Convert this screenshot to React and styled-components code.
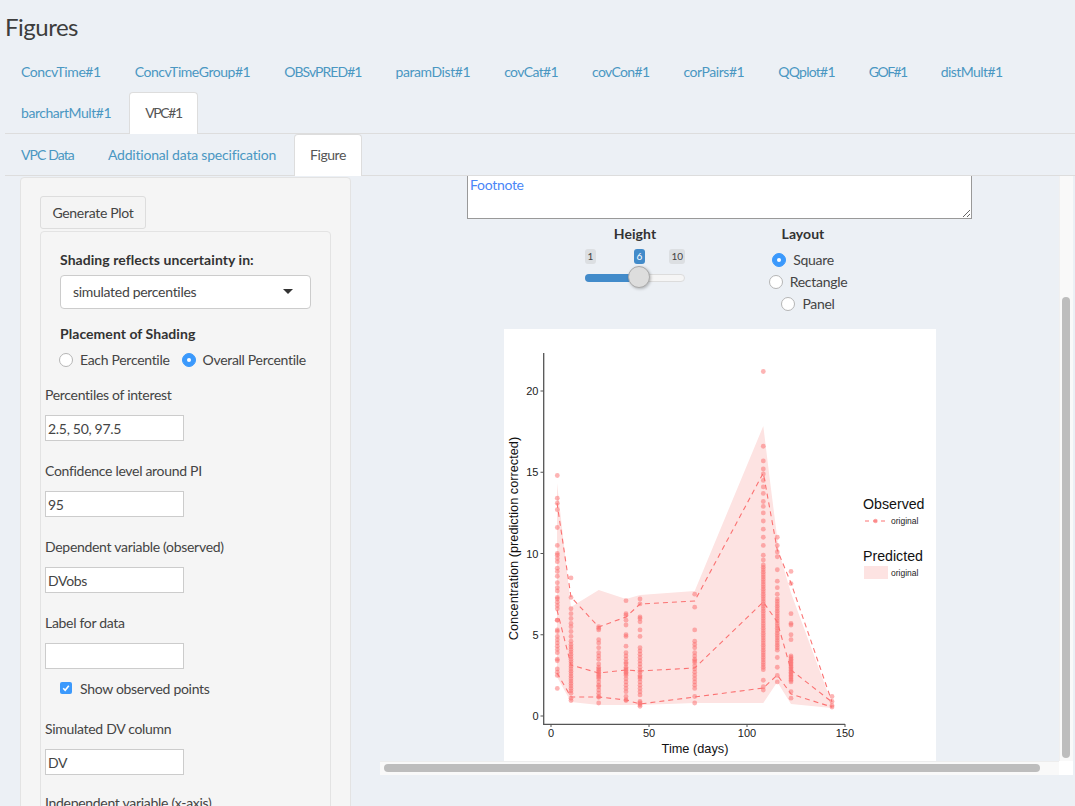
import styled, { createGlobalStyle } from "styled-components";

const GlobalStyle = createGlobalStyle`
  html, body {
    margin: 0;
    height: 100%;
    overflow: hidden;
    background: #ecf0f5;
    color: #444;
    font-family: Lato, "Noto Sans", sans-serif;
    font-size: 14px;
    letter-spacing: -0.3px;
  }
  * { box-sizing: border-box; }
`;

const Page = styled.div`
  width: 1075px;
  height: 806px;
  overflow: hidden;
`;

const Title = styled.h2`
  margin: 0;
  height: 52px;
  padding: 13px 0 0 5px;
  font-size: 24px;
  line-height: 28px;
  font-weight: 400;
  color: #3d3d3d;
  letter-spacing: -0.5px;
`;

const TabBar = styled.ul`
  list-style: none;
  margin: 0 0 0 5px;
  padding: 0;
  display: flex;
  flex-wrap: wrap;
  column-gap: 2px;
  border-bottom: 1px solid #ddd;
`;

const Tab = styled.li`
  height: ${(p) => p.$h + (p.$active ? 1 : 0)}px;
  padding: 0 15px;
  line-height: ${(p) => p.$lh}px;
  letter-spacing: ${(p) => p.$track}px;
  color: ${(p) => (p.$active ? "#555" : "#4a97c2")};
  background: ${(p) => (p.$active ? "#fff" : "transparent")};
  border: 1px solid ${(p) => (p.$active ? "#ddd" : "transparent")};
  border-bottom: none;
  border-radius: 4px 4px 0 0;
  margin-bottom: ${(p) => (p.$active ? "-1px" : "0")};
`;

const Main = styled.div`
  display: flex;
  height: 630px;
  overflow: hidden;
`;

const Sidebar = styled.div`
  flex: 0 0 380px;
  padding: 1px 29px 0 20px;
  overflow: hidden;
`;

const Well = styled.div`
  background: #f5f5f5;
  border: 1px solid #e3e3e3;
  border-radius: 4px;
  padding: 18px 19px;
`;

const PlotButton = styled.button`
  display: block;
  width: 106px;
  height: 33px;
  padding: 0;
  background: #f4f4f4;
  border: 1px solid #ddd;
  border-radius: 3px;
  color: #444;
  font: inherit;
  letter-spacing: inherit;
  margin-bottom: 2px;
`;

const InnerWell = styled.div`
  background: #f5f5f5;
  border: 1px solid #e3e3e3;
  border-radius: 4px;
  padding: 19px 4px 0;
`;

const ShadingGroup = styled.div`
  padding: 0 15px;
`;

const BoldLabel = styled.div`
  font-weight: 700;
  line-height: 18px;
  color: #333;
  letter-spacing: 0.05px;
  margin-bottom: ${(p) => p.$mb || 0}px;
`;

const SelectBox = styled.div`
  height: 34px;
  width: 251px;
  display: flex;
  align-items: center;
  justify-content: space-between;
  padding: 0 17px 2px 12px;
  background: #fff;
  border: 1px solid #ccc;
  border-radius: 4px;
  margin-bottom: 16px;
`;

const Caret = styled.span`
  width: 0;
  height: 0;
  border-left: 5px solid transparent;
  border-right: 5px solid transparent;
  border-top: 5px solid #333;
`;

const RadioRow = styled.div`
  display: flex;
  gap: 12px;
  margin-top: 7px;
  margin-left: -1px;
  height: 20px;
  margin-bottom: 15px;
`;

const RadioLabel = styled.label`
  display: inline-flex;
  align-items: center;
  gap: 7px;
  line-height: 20px;
  white-space: nowrap;
`;

const RadioDot = styled.span`
  width: 14px;
  height: 14px;
  flex: none;
  border-radius: 50%;
  background: ${(p) => (p.$on ? "#3b99fc" : "#fff")};
  border: 1px solid ${(p) => (p.$on ? "#3b99fc" : "#b5b5b5")};
  display: flex;
  align-items: center;
  justify-content: center;
  &::after {
    content: "";
    width: 4px;
    height: 4px;
    border-radius: 50%;
    background: ${(p) => (p.$on ? "#fff" : "transparent")};
  }
`;

const Field = styled.div`
  height: ${(p) => p.$h || 76}px;
`;

const FieldLabel = styled.div`
  line-height: 20px;
  margin-bottom: 10px;
`;

const TextInput = styled.input`
  display: block;
  width: 139px;
  height: 26px;
  padding: 0 2px;
  background: #fff;
  border: 1px solid #ccc;
  border-radius: 0;
  color: #444;
  font: inherit;
  letter-spacing: inherit;
`;

const CheckRow = styled.div`
  display: flex;
  align-items: center;
  gap: 8px;
  height: 20px;
  margin: -11px 0 21px 15px;
`;

const CheckBox = styled.span`
  width: 12px;
  height: 12px;
  border-radius: 2px;
  background: #3b99fc;
  display: flex;
  align-items: center;
  justify-content: center;
`;

const Pane = styled.div`
  flex: 0 0 693px;
  display: grid;
  grid-template-columns: 679px 14px;
  grid-template-rows: 585px 14px;
`;

const PaneBody = styled.div`
  display: flex;
  flex-direction: column;
  align-items: center;
  overflow: hidden;
`;

const Footnote = styled.textarea`
  flex: none;
  width: 505px;
  height: 43px;
  padding: 0 2px;
  background: #fff;
  border: 1px solid #999;
  border-top: none;
  border-radius: 0;
  color: #4a86f7;
  font: inherit;
  letter-spacing: inherit;
  line-height: 18px;
  outline: none;
  resize: both;
`;

const Controls = styled.div`
  flex: none;
  display: flex;
  gap: 77px;
  height: 110px;
  padding-top: 6px;
`;

const SliderCol = styled.div`
  width: 100px;
`;

const LayoutCol = styled.div`
  width: 92px;
  display: flex;
  flex-direction: column;
  align-items: center;
`;

const CenterLabel = styled.div`
  font-weight: 700;
  font-size: 14px;
  line-height: 18px;
  color: #333;
  letter-spacing: 0.05px;
  text-align: center;
  padding-right: ${(p) => p.$nudge || 0}px;
`;

const SliderLabels = styled.div`
  display: flex;
  margin-top: 6px;
`;

const SliderTag = styled.span`
  height: 15px;
  min-width: 11px;
  margin-left: ${(p) => p.$ml || 0}px;
  padding: 0 2.5px;
  font-size: 10px;
  line-height: 15px;
  text-align: center;
  border-radius: 3px;
  letter-spacing: 0;
  background: ${(p) => (p.$on ? "#428bca" : "#dcdfe2")};
  color: ${(p) => (p.$on ? "#fff" : "#444")};
`;

const SliderTrack = styled.div`
  position: relative;
  height: 8px;
  margin-top: 10px;
  background: #f5f5f5;
  border: 1px solid #dcdcdc;
  border-radius: 4px;
`;

const SliderFill = styled.div`
  height: 8px;
  margin: -1px 0 0 -1px;
  background: #428bca;
  border-radius: 4px 0 0 4px;
`;

const SliderHandle = styled.div`
  position: absolute;
  top: -9px;
  left: 42px;
  width: 22px;
  height: 22px;
  border-radius: 50%;
  background: #ddd;
  border: 1px solid #aaa;
  box-shadow: 1px 1px 3px rgba(0, 0, 0, 0.25);
`;

const LayoutOptions = styled.div`
  margin-top: 6px;
  display: flex;
  flex-direction: column;
  align-items: center;
`;

const LayoutOption = styled(RadioLabel)`
  height: 22px;
  padding-right: ${(p) => p.$nudge || 0}px;
`;

const PlotSvg = styled.svg`
  flex: none;
  display: block;
  width: 432px;
  height: 432px;
  background: #fff;
`;

const VTrack = styled.div`
  background: #f9f9f9;
  border-left: 1px solid #f0f0f0;
  padding: 121px 3px 3px 2px;
`;

const VThumb = styled.div`
  width: 8px;
  height: 100%;
  border-radius: 4px;
  background: #bdbdbd;
`;

const HTrack = styled.div`
  background: #f9f9f9;
  border-top: 1px solid #ededed;
  padding: 2px 19px 2px 4px;
`;

const HThumb = styled.div`
  height: 8px;
  border-radius: 4px;
  background: #bdbdbd;
`;

const Corner = styled.div`
  background: #fff;
`;

const xPx = (t) => 551 + t * 1.96;
const yPx = (v) => 716 - v * 16.25;

const range = (from, to, step) => {
  const out = [];
  for (let v = from; v >= to; v -= step) out.push(v);
  return out;
};

const columns = [
  [557.3, [14.8, 13.4, 13.1, 12.7, 11.6, 10.5, 10, 9.9, 9.7, 9.5, 9.1, 8.9, 8.6, 8.2, 7.9, 7.7, 7.3, 7.2, 7, 6.8, 6.6, 5.9, 5.9, 5.3, 5.2, 4.9, 4.7, 4.5, 4.3, 4.1, 3.9, 3.5, 3.4, 2.9, 2.7, 2.5, 1.7]],
  [571, [8.5, 7.3, 6.6, 6.3, 6, 5.7, 5.5, 5.2, 4.9, 4.6, ...range(4.4, 1.3, 0.15), 1.1, 0.95]],
  [598.7, [5.5, 5.4, 5.3, 4.7, 4.5, 4.2, 3.9, 3.7, 3.5, 3.2, 3, 2.9, 2.8, 2.7, 2.6, 2.5, 2.4, 2.3, 2.1, 1.9, 1.8, 1.6, 1.4, 1.2, 1.15, 0.8]],
  [626, [7.1, 6.3, 6.2, 5.9, 5.6, 5, 4.9, 4.3, 3.9, 3.7, 3.5, 3.3, 3.2, 3, 2.9, 2.8, 2.7, 2.6, 2.5, 2.3, 2.1, 1.9, 1.7, 1.5, 1.2, 1, 0.95]],
  [640, [7.2, 6.9, 6.1, 6, 5.8, 5.3, 4.9, 4.2, 4, 3.8, 3.6, 3.4, 3.2, 3, 2.8, 2.7, 2.5, 2.4, 2.3, 2.1, 1.9, 1.7, 1.5, 1.3, 0.9, 0.8, 0.7, 0.6]],
  [694.7, [7.5, 6.7, 5.3, 4.6, 4.4, 4.2, 3.9, 3.7, 3.5, 3.4, 3.3, 3.1, 2.9, 2.7, 2.5, 2.3, 2.1, 1.9, 1.7, 1.2, 0.8]],
  [763.3, [21.2, 16.6, 15.7, 15.2, 14.9, 14.5, 14.1, 13.7, 13.2, 12.9, 12.5, 12, 11.5, 11, 10.5, 9.9, 9.6, ...range(9.3, 2.7, 0.15), 2.2, 1.8, 1.6]],
  [777.3, [11, 10.5, 10.1, 9.8, 9, 8.3, 7.9, 7.5, ...range(7.2, 4, 0.15), 3.6, 3, 2.5, 2.1]],
  [791, [8.9, 8.15, 6.3, 5.7, 5.6, 5, 4.7, ...range(3.7, 2, 0.1), 1.5, 1.1]],
  [832, [1.2, 0.9, 0.65, 0.55]],
];

const ribbon =
  "557,483 560,510 571,607 598.7,590 626,599 640,595 694.7,591 763.3,426 769,473 779,552 791,593 832,704 832,708 791,704 777.3,682 763.3,703 694.7,703 640,705 598.7,705 571,702 557,677";

const lines = [
  "557,503 571,597 598.7,627 626,617 640,604 694.7,601 763.3,473 777.3,550 791,583 832,702",
  "557,610 571,665 598.7,673 626,670 640,671 694.7,668 763.3,602 777.3,622 791,670 832,702",
  "557,673 571,697 598.7,697 626,700 640,704 694.7,697 763.3,688 777.3,675 791,694 832,707",
];

const xTicks = [0, 50, 100, 150];
const yTicks = [0, 5, 10, 15, 20];

const Plot = () => (
  <PlotSvg viewBox="504 329 432 432" fontFamily='"Liberation Sans", sans-serif' letterSpacing="0">
    <polygon points={ribbon} fill="#fde3e2" />
    {columns.map(([x, values]) =>
      values.map((v, i) => (
        <circle key={`${x}-${i}`} cx={x} cy={yPx(v)} r="2.4" fill="#fb6a6a" opacity="0.5" />
      ))
    )}
    {lines.map((pts) => (
      <polyline key={pts} points={pts} fill="none" stroke="#fb7272" strokeWidth="1.1" strokeDasharray="5 4" />
    ))}
    <path d="M543.7 353V724.3H845" fill="none" stroke="#555" strokeWidth="1.3" />
    {xTicks.map((t) => (
      <g key={t}>
        <line x1={xPx(t)} x2={xPx(t)} y1="724" y2="727" stroke="#555" />
        <text x={xPx(t)} y="737" fontSize="11" textAnchor="middle" fill="#222">{t}</text>
      </g>
    ))}
    {yTicks.map((v) => (
      <g key={v}>
        <line x1="540.5" x2="543.5" y1={yPx(v)} y2={yPx(v)} stroke="#555" />
        <text x="538.5" y={yPx(v) + 4} fontSize="11" textAnchor="end" fill="#222">{v}</text>
      </g>
    ))}
    <text x="695" y="753" fontSize="12.75" textAnchor="middle" fill="#111">Time (days)</text>
    <text transform="translate(518 538.5) rotate(-90)" fontSize="12.75" textAnchor="middle" fill="#111">
      Concentration (prediction corrected)
    </text>
    <text x="863" y="509" fontSize="14.2" fill="#111">Observed</text>
    <line x1="865" x2="887" y1="521" y2="521" stroke="#fb7272" strokeDasharray="4 4" />
    <circle cx="875.5" cy="521" r="2.2" fill="#fb6a6a" opacity="0.6" />
    <text x="891" y="524" fontSize="8.5" fill="#222">original</text>
    <text x="863" y="561" fontSize="14.2" fill="#111">Predicted</text>
    <rect x="864" y="566" width="24" height="13" fill="#fde3e2" />
    <text x="891" y="576" fontSize="8.5" fill="#222">original</text>
  </PlotSvg>
);

const topTabs = [
  ["ConcvTime#1", -0.42, 40, 37],
  ["ConcvTimeGroup#1", -0.46, 40, 37],
  ["OBSvPRED#1", -0.95, 40, 37],
  ["paramDist#1", -0.42, 40, 37],
  ["covCat#1", -0.65, 40, 37],
  ["covCon#1", -0.65, 40, 37],
  ["corPairs#1", -0.45, 40, 37],
  ["QQplot#1", -0.75, 40, 37],
  ["GOF#1", -1.55, 40, 37],
  ["distMult#1", -0.55, 40, 37],
  ["barchartMult#1", -0.45, 41, 40],
  ["VPC#1", -1.35, 41, 40],
];
const subTabs = [
  ["VPC Data", -0.9],
  ["Additional data specification", -0.2],
  ["Figure", -0.45],
];

const fieldsTop = [
  ["Percentiles of interest", "2.5, 50, 97.5"],
  ["Confidence level around PI", "95"],
  ["Dependent variable (observed)", "DVobs"],
  ["Label for data", ""],
];

const Radio = ({ on, children }) => (
  <RadioLabel>
    <RadioDot $on={on} />
    {children}
  </RadioLabel>
);

export default function App() {
  return (
    <Page>
      <GlobalStyle />
      <Title>Figures</Title>
      <TabBar>
        {topTabs.map(([t, track, h, lh]) => (
          <Tab key={t} $h={h} $lh={lh} $track={track} $active={t === "VPC#1"}>{t}</Tab>
        ))}
      </TabBar>
      <TabBar>
        {subTabs.map(([t, track]) => (
          <Tab key={t} $h={41} $lh={40} $track={track} $active={t === "Figure"}>{t}</Tab>
        ))}
      </TabBar>
      <Main>
        <Sidebar>
          <Well>
            <PlotButton>Generate Plot</PlotButton>
            <InnerWell>
              <ShadingGroup>
                <BoldLabel $mb={6}>Shading reflects uncertainty in:</BoldLabel>
                <SelectBox>
                  simulated percentiles
                  <Caret />
                </SelectBox>
                <BoldLabel>Placement of Shading</BoldLabel>
                <RadioRow>
                  <Radio>Each Percentile</Radio>
                  <Radio on>Overall Percentile</Radio>
                </RadioRow>
              </ShadingGroup>
              {fieldsTop.map(([label, value]) => (
                <Field key={label}>
                  <FieldLabel>{label}</FieldLabel>
                  <TextInput defaultValue={value} />
                </Field>
              ))}
              <CheckRow>
                <CheckBox>
                  <svg width="10" height="10" viewBox="0 0 10 10">
                    <path d="M2.2 5.2 4.2 7.3 7.8 2.8" fill="none" stroke="#fff" strokeWidth="1.6" />
                  </svg>
                </CheckBox>
                Show observed points
              </CheckRow>
              <Field $h={74}>
                <FieldLabel>Simulated DV column</FieldLabel>
                <TextInput defaultValue="DV" />
              </Field>
              <Field>
                <FieldLabel>Independent variable (x-axis)</FieldLabel>
              </Field>
            </InnerWell>
          </Well>
        </Sidebar>
        <Pane>
          <PaneBody>
            <Footnote defaultValue="Footnote" />
            <Controls>
              <SliderCol>
                <CenterLabel>Height</CenterLabel>
                <SliderLabels>
                  <SliderTag>1</SliderTag>
                  <SliderTag $on $ml={38}>6</SliderTag>
                  <SliderTag $ml={24}>10</SliderTag>
                </SliderLabels>
                <SliderTrack>
                  <SliderFill style={{ width: `${(5 / 9) * 98}%` }} />
                  <SliderHandle />
                </SliderTrack>
              </SliderCol>
              <LayoutCol>
                <CenterLabel $nudge={10}>Layout</CenterLabel>
                <LayoutOptions>
                  <LayoutOption $nudge={10}><RadioDot $on />Square</LayoutOption>
                  <LayoutOption><RadioDot />Rectangle</LayoutOption>
                  <LayoutOption><RadioDot />Panel</LayoutOption>
                </LayoutOptions>
              </LayoutCol>
            </Controls>
            <Plot />
          </PaneBody>
          <VTrack><VThumb /></VTrack>
          <HTrack><HThumb /></HTrack>
          <Corner />
        </Pane>
      </Main>
    </Page>
  );
}
